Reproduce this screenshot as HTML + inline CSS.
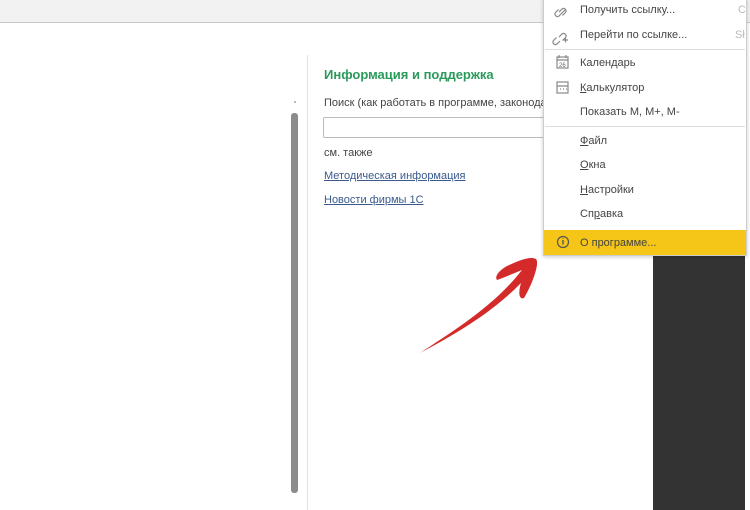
<!DOCTYPE html>
<html><head><meta charset="utf-8"><style>
*{margin:0;padding:0;box-sizing:border-box}
body{width:750px;height:510px;overflow:hidden;background:#fff;font-family:"Liberation Sans","Noto Sans CJK SC",sans-serif;position:relative;color:#444}
.abs{position:absolute}
.mi{position:absolute;left:580px;font-size:11px;color:#444;white-space:nowrap}
.sep{position:absolute;left:545px;width:200px;height:1px;background:#ddd}
a{color:#3a5a8c;text-decoration:underline}
</style></head><body>
<div class="abs" style="left:0;top:0;width:750px;height:23px;background:#f2f2f2;border-bottom:1px solid #c8c8c8"></div>
<div class="abs" style="left:307px;top:55px;width:1px;height:455px;background:#e2e2e2"></div>
<div class="abs" style="left:294px;top:101px;width:2px;height:2px;background:#bbb"></div>
<div class="abs" style="left:291px;top:113px;width:7px;height:380px;background:#8c8c8c;border-radius:3px"></div>
<div class="abs" style="left:324px;top:67px;font-size:13px;font-weight:bold;color:#2a9a5a">Информация и поддержка</div>
<div class="abs" style="left:324px;top:97px;font-size:11px;white-space:nowrap">Поиск (как работать в программе, законодат</div>
<div class="abs" style="left:323px;top:117px;width:230px;height:21px;border:1px solid #bbb;border-radius:2px"></div>
<div class="abs" style="left:324px;top:147px;font-size:11px">см. также</div>
<div class="abs" style="left:324px;top:170px;font-size:11px"><a>Методическая информация</a></div>
<div class="abs" style="left:324px;top:194px;font-size:11px"><a>Новости фирмы 1С</a></div>
<div class="abs" style="left:653px;top:255px;width:92px;height:255px;background:#333"></div>
<div class="abs" style="left:543px;top:-2px;width:204px;height:258px;background:#fff;border:1px solid #ccc;box-shadow:0 1px 4px rgba(0,0,0,.2)"></div>
<div class="abs" style="left:544px;top:230px;width:202px;height:25px;background:#f5c518"></div>
<div class="mi" style="top:4px">Получить ссылку...</div><div class="mi" style="top:4px;left:738px;color:#bbb">C</div>
<div class="mi" style="top:29px">Перейти по ссылке...</div><div class="mi" style="top:29px;left:735px;color:#bbb">Sł</div>
<div class="sep" style="top:49px"></div>
<div class="mi" style="top:57px">Календарь</div>
<div class="mi" style="top:82px"><u>К</u>алькулятор</div>
<div class="mi" style="top:106px">Показать М, М+, М-</div>
<div class="sep" style="top:126px"></div>
<div class="mi" style="top:135px"><u>Ф</u>айл</div>
<div class="mi" style="top:159px"><u>О</u>кна</div>
<div class="mi" style="top:184px"><u>Н</u>астройки</div>
<div class="mi" style="top:208px">Сп<u>р</u>авка</div>
<div class="mi" style="top:237px">О программе...</div>
<svg class="abs" style="left:0;top:0" width="750" height="510">
<g fill="none" stroke="#888" stroke-width="1.2">
<path d="M559 12l3-3a2.5 2.5 0 013.5 3.5l-3 3M565 10l-3 3-3 3a2.5 2.5 0 01-3.5-3.5l3-3"/>
<path d="M559 37l3-3a2.5 2.5 0 013.5 3.5l-3 3M560 41l-3 3a2.5 2.5 0 01-3.5-3.5l3-3M563 40h5M565.5 37.5v5"/>
<rect x="557" y="57" width="11" height="11"/><path d="M557 60h11M559 55v3M566 55v3"/>
<rect x="557" y="82" width="11" height="11"/><path d="M557 86h11M560 89h1M563 89h1M566 89h1"/>
<circle cx="563" cy="242" r="5.5" stroke="#555"/>
</g>
<text x="559" y="67" font-size="6" fill="#666" font-family="Liberation Sans">26</text>
<path d="M563 240v4.5M563 238.3v.5" stroke="#555" stroke-width="1.4"/>
<path d="M420 353C455 330 495 305 522 270C512 274 503 278 497 280C494 276 500 270 507 266C520 260 530 256 536 259C540 263 532 285 524 298C519 300 518 293 521 283C490 315 450 337 420 353Z" fill="#d42a2a"/>
</svg>
</body></html>
